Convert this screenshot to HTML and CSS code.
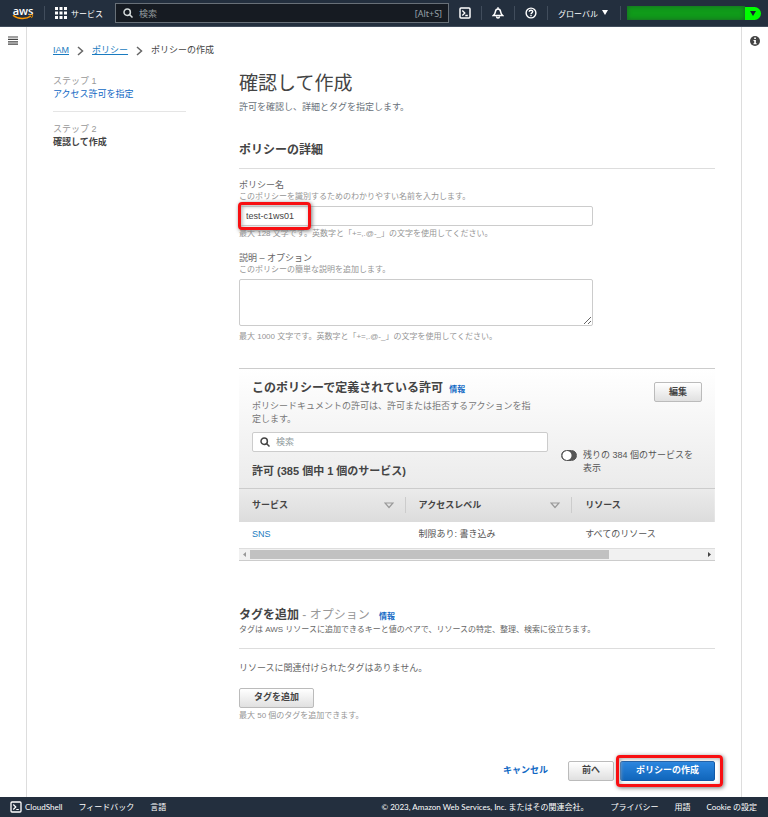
FILE: index.html
```html
<!DOCTYPE html>
<html lang="ja">
<head>
<meta charset="utf-8">
<title>ポリシーの作成 | IAM</title>
<link rel="stylesheet" href="styles.css">
</head>
<body>
<header class="topbar">
  <a class="logo" href="#"><span>aws</span>
    <svg width="22" height="6" viewBox="0 0 22 6"><path d="M1 1.2C6 5.4 14 5.4 19 2" fill="none" stroke="#f90" stroke-width="1.5"/><path d="M17 .8c2-.6 3.5-.4 3.6 0 .2.700-.3 2.200-1.300 3.200" fill="none" stroke="#f90" stroke-width="1"/></svg>
  </a>
  <i class="sep"></i>
  <button class="top-btn services" type="button">
    <svg width="12" height="12" viewBox="0 0 12 12" fill="#fff"><path d="M0 0h3v3H0zM4.500 0h3v3h-3zM9 0h3v3H9zM0 4.500h3v3H0zM4.500 4.500h3v3h-3zM9 4.500h3v3H9zM0 9h3v3H0zM4.500 9h3v3h-3zM9 9h3v3H9z"/></svg>
    サービス
  </button>
  <div class="top-search">
    <svg width="10" height="10" viewBox="0 0 10 10" fill="none" stroke="#d5dbdb" stroke-width="1.500"><circle cx="4.200" cy="4.200" r="3.200"/><path d="M6.500 6.500 9.500 9.500"/></svg>
    <input type="search" placeholder="検索" aria-label="検索">
    <span>[Alt+S]</span>
  </div>
  <div class="top-tools">
    <button class="top-btn tool" type="button" aria-label="CloudShell">
      <svg width="12" height="12" viewBox="0 0 12 12" fill="none" stroke="#fff"><rect x="1" y="1" width="10" height="10" rx="1" stroke-width="1.500"/><path d="M3.300 3.500 5.800 6 3.300 8.500M6.300 8.500h2.500" stroke-width="1.300"/></svg>
    </button>
    <i class="sep"></i>
    <button class="top-btn tool" type="button" aria-label="通知">
      <svg width="12" height="12" viewBox="0 0 12 12" fill="none" stroke="#fff" stroke-width="1.500"><path d="M6 .3v1.500M1.300 8.500h9.400C9 7 8.800 6 8.600 4.600 8.300 2.800 7.300 2 6 2S3.700 2.800 3.400 4.600C3.200 6 3 7 1.300 8.500zM4.500 9.500c.2 2 2.800 2 3 0"/></svg>
    </button>
    <i class="sep"></i>
    <button class="top-btn tool" type="button" aria-label="ヘルプ">
      <svg width="12" height="12" viewBox="0 0 12 12" fill="none" stroke="#fff" stroke-width="1.400"><circle cx="6" cy="6" r="4.900"/><path d="M4.200 4.800C4.300 2.700 7.800 2.800 7.700 4.800 7.600 5.900 6 5.800 6 7.200M6 8v1.300"/></svg>
    </button>
    <i class="sep"></i>
    <button class="top-btn region" type="button">グローバル <svg width="6" height="6" viewBox="0 0 6 6"><path d="M0 0h6L3 5z" fill="#fff"/></svg></button>
    <i class="sep"></i>
    <button class="account" type="button" aria-label="アカウント"><span></span><svg width="6" height="5" viewBox="0 0 6 5"><path d="M0 0h6L3 5z" fill="#16222e"/></svg></button>
  </div>
</header>

<div class="shell">
  <aside class="rail rail-left">
    <button type="button" aria-label="メニュー"><svg width="10" height="9" viewBox="0 0 10 9"><path d="M0 1h10M0 3.400h10M0 5.800h10M0 8.200h10" stroke="#444" stroke-width="1.200"/></svg></button>
  </aside>
  <main class="page">
    <nav class="crumbs" aria-label="パンくず">
      <a href="#">IAM</a>
      <svg width="7" height="10" viewBox="0 0 7 10"><path d="M1 1l4.500 4L1 9" fill="none" stroke="#666" stroke-width="1.500"/></svg>
      <a href="#">ポリシー</a>
      <svg width="7" height="10" viewBox="0 0 7 10"><path d="M1 1l4.500 4L1 9" fill="none" stroke="#666" stroke-width="1.500"/></svg>
      <span>ポリシーの作成</span>
    </nav>
    <div class="wizard">
      <ol class="steps">
        <li><small>ステップ 1</small><a href="#">アクセス許可を指定</a></li>
        <li><small>ステップ 2</small><strong>確認して作成</strong></li>
      </ol>
      <form class="content">
        <h1>確認して作成</h1>
        <p class="lead">許可を確認し、詳細とタグを指定します。</p>

        <section class="details">
          <h2>ポリシーの詳細</h2>
          <div class="field">
            <label for="name">ポリシー名</label>
            <p class="hint">このポリシーを識別するためのわかりやすい名前を入力します。</p>
            <div class="marked name-mark"><input id="name" type="text" value="test-c1ws01"></div>
            <p class="hint below">最大 128 文字です。英数字と「+=,.@-_」の文字を使用してください。</p>
          </div>
          <div class="field">
            <label for="desc">説明 – オプション</label>
            <p class="hint">このポリシーの簡単な説明を追加します。</p>
            <textarea id="desc"></textarea>
            <p class="hint below">最大 1000 文字です。英数字と「+=,.@-_」の文字を使用してください。</p>
          </div>
        </section>

        <section class="panel">
          <div class="panel-head">
            <div class="panel-main">
              <h2>このポリシーで定義されている許可 <a class="info" href="#">情報</a></h2>
              <p>ポリシードキュメントの許可は、許可または拒否するアクションを指定します。</p>
              <div class="search">
                <svg width="10" height="10" viewBox="0 0 10 10" fill="none" stroke="#444" stroke-width="1.500"><circle cx="4.200" cy="4.200" r="3.200"/><path d="M6.500 6.500 9.500 9.500"/></svg>
                <input type="search" placeholder="検索" aria-label="許可を検索">
              </div>
              <h3>許可 (385 個中 1 個のサービス)</h3>
            </div>
            <div class="panel-side">
              <button class="btn" type="button">編集</button>
              <label class="toggle"><input type="checkbox" role="switch"><span>残りの 384 個のサービスを表示</span></label>
            </div>
          </div>
          <table>
            <thead><tr>
              <th><div>サービス<svg width="10" height="7" viewBox="0 0 10 7"><path d="M1 1h8L5 5.500z" fill="none" stroke="#999" stroke-width="1.200"/></svg></div></th>
              <th><div>アクセスレベル<svg width="10" height="7" viewBox="0 0 10 7"><path d="M1 1h8L5 5.500z" fill="none" stroke="#999" stroke-width="1.200"/></svg></div></th>
              <th><div>リソース</div></th>
            </tr></thead>
            <tbody><tr><td><a href="#">SNS</a></td><td>制限あり: 書き込み</td><td>すべてのリソース</td></tr></tbody>
          </table>
          <div class="hscroll">
            <svg width="11" height="7" viewBox="0 0 11 7"><path d="M7 1v5L4 3.500z" fill="#999"/></svg>
            <div class="track"><div class="thumb"></div></div>
            <svg width="11" height="7" viewBox="0 0 11 7"><path d="M4 1v5l3-2.500z" fill="#444"/></svg>
          </div>
        </section>

        <section class="tags">
          <h2>タグを追加 <span>- オプション</span> <a class="info" href="#">情報</a></h2>
          <p class="tag-desc">タグは AWS リソースに追加できるキーと値のペアで、リソースの特定、整理、検索に役立ちます。</p>
          <p class="empty">リソースに関連付けられたタグはありません。</p>
          <button class="btn" type="button">タグを追加</button>
          <p class="hint">最大 50 個のタグを追加できます。</p>
        </section>

        <div class="actions">
          <a href="#">キャンセル</a>
          <button class="btn" type="button">前へ</button>
          <div class="marked submit-mark"><button class="btn primary" type="submit">ポリシーの作成</button></div>
        </div>
      </form>
    </div>
  </main>
  <aside class="rail rail-right">
    <button type="button" aria-label="情報"><svg width="10" height="10" viewBox="0 0 10 10"><circle cx="5" cy="5" r="5" fill="#444"/><path d="M4.200 1.500h1.700V3H4.200zM3.500 4h2.400v3.200h.8v1H3.400v-1h.8V5h-.7z" fill="#fff"/></svg></button>
  </aside>
</div>

<footer class="footer">
  <a class="shell-link" href="#"><svg width="12" height="12" viewBox="0 0 12 12" fill="none" stroke="#fff"><rect x="1" y="1" width="10" height="10" rx="1" stroke-width="1.300"/><path d="M3.300 3.500 5.800 6 3.300 8.500M6.300 8.500h2.500" stroke-width="1.200"/></svg>CloudShell</a>
  <a href="#">フィードバック</a>
  <a href="#">言語</a>
  <span class="copy">© 2023, Amazon Web Services, Inc. またはその関連会社。</span>
  <a class="privacy" href="#">プライバシー</a>
  <a href="#">用語</a>
  <a href="#">Cookie の設定</a>
</footer>
</body>
</html>
```
FILE: styles.css
```css
*, *::before, *::after { box-sizing: border-box; }
body {
  margin: 0;
  min-height: 100vh;
  display: flex;
  flex-direction: column;
  background: #fff;
  color: #444;
  font: 9px/13px "Liberation Sans", "Noto Sans CJK JP", sans-serif;
}
h1, h2, h3, p, ol { margin: 0; padding: 0; }
a { color: #0f68c4; text-decoration: none; }
button, input, textarea { font: inherit; color: inherit; }
svg { display: block; flex: none; }

/* Top bar */
.topbar {
  display: flex;
  align-items: center;
  height: 27px;
  padding: 0 7px 0 12px;
  background: #232f3e;
  border-bottom: 1px solid #414d5c;
  color: #fff;
  font-family: "Noto Sans", "Noto Sans CJK JP", sans-serif;
}
.logo {
  width: 22px;
  color: #fff;
  font: 600 11px/9px "Open Sans", sans-serif;
}
.logo span { display: block; height: 8px; text-align: center; }
.sep { width: 1px; height: 14px; background: #414d5c; flex: none; }
.logo + .sep { margin: 0 10px; }
.top-btn {
  display: flex;
  align-items: center;
  gap: 4px;
  padding: 0;
  border: 0;
  background: none;
  white-space: nowrap;
}
.services { font-size: 8px; }
.top-search {
  flex: 1;
  display: flex;
  align-items: center;
  gap: 6px;
  height: 20px;
  margin: 0 10px 0 12px;
  padding: 0 6px 0 7px;
  background: #161b22;
  border: 1px solid #687078;
  color: #95a0a8;
}
.top-search input, .search input {
  flex: 1;
  min-width: 0;
  padding: 0;
  border: 0;
  outline: 0;
  background: none;
}
input::placeholder { color: #909a9c; opacity: 1; }
.top-tools { display: flex; align-items: center; }
.tool { padding: 0 10px; }
.tool:first-child { padding-left: 0; }
.region { padding: 0 12px 0 10px; font-size: 8px; gap: 4px; }
.account {
  display: flex;
  align-items: center;
  width: 134px;
  height: 13px;
  margin-left: 6px;
  padding: 0 5px 0 0;
  border: 0;
  border-radius: 0 7px 7px 0;
  background: #0f0;
}
.account span {
  flex: 1;
  height: 14px;
  margin-right: 5px;
  background: #109b1a;
  box-shadow: inset 0 0 5px #1b6028;
}

/* Frame */
.shell { flex: 1; display: flex; }
.rail { width: 27px; padding-top: 9px; flex: none; }
.rail button { display: block; padding: 0; border: 0; background: none; }
.rail-left { padding-left: 8px; border-right: 1px solid #ddd; }
.rail-right { padding-left: 8px; border-left: 1px solid #ddd; }
.page { flex: 1; min-width: 0; padding: 17px 26px 14px; }
.crumbs { display: flex; align-items: center; gap: 8px; }
.crumbs a { color: #1a7bc0; text-decoration: underline; }
.wizard { display: flex; gap: 53px; padding-top: 15px; }

/* Steps */
.steps { width: 133px; flex: none; padding-top: 3px; list-style: none; }
.steps li { padding-bottom: 10px; }
.steps li + li { padding-top: 11px; border-top: 1px solid #e5e5e5; }
.steps small { display: block; color: #999; font-size: 9px; }
.steps a, .steps strong { display: block; }

/* Content */
.content { flex: 1; min-width: 0; }
h1 { font-size: 19px; line-height: 24px; font-weight: 400; }
h2 { font-size: 12px; line-height: 18px; }
h3 { font-size: 11px; line-height: 13px; }
.lead { padding-top: 5px; color: #687078; }
.details h2 { margin-top: 27px; padding-bottom: 9px; border-bottom: 1px solid #ddd; }
.field { width: 75%; max-width: 354px; padding-top: 10px; }
.field label { display: block; color: #666; line-height: 12px; }
.hint { color: #959595; font-size: 8px; line-height: 11px; }
.below { padding-top: 2px; }
.field + .field { padding-top: 13px; }
.field input, .field textarea {
  display: block;
  width: 100%;
  height: 20px;
  margin: 4px 0 0;
  padding: 0 6px;
  border: 1px solid #ccc;
  border-radius: 2px;
  outline: 0;
  background: #fff;
}
.field textarea { height: 47px; margin-bottom: 3px; resize: both; }

/* Red marker frames lying over the controls */
.marked { position: relative; }
.marked::after {
  content: "";
  position: absolute;
  border: 3px solid #f80f12;
  border-radius: 4px;
  box-shadow: 1px 1px 4px #777, inset 1px 1px 4px #aaa;
  pointer-events: none;
}
.name-mark::after { left: -1px; top: -4px; width: 73px; height: 28px; }
.submit-mark::after { inset: -6px -8px -6px -4px; }

/* Buttons */
.btn {
  height: 20px;
  padding: 0 13px;
  border: 1px solid #bbb;
  border-radius: 2px;
  background: linear-gradient(#fff, #e0e0e0);
  color: #444;
  font-weight: 700;
  white-space: nowrap;
}
.primary {
  border-color: #1059a8;
  background: linear-gradient(#2a86e0, #1166bb);
  color: #fff;
  padding: 0 15px;
}
.info { margin-left: 3px; font-size: 8px; line-height: 12px; font-weight: 700; }

/* Permissions panel */
.panel { margin-top: 26px; border-top: 1px solid #ccc; border-bottom: 1px solid #ccc; }
.panel-head {
  display: flex;
  gap: 13px;
  padding: 10px 13px 10px;
  background: linear-gradient(#fff, #ebebeb);
}
.panel-main { flex: 1; }
.panel-main p { padding: 3px 10px 6px 0; color: #777; }
.panel-side {
  width: 141px;
  flex: none;
  display: flex;
  flex-direction: column;
  align-items: flex-end;
  justify-content: space-between;
  padding: 3px 0 3px;
}
.panel-side .btn { width: 48px; }
.search {
  display: flex;
  align-items: center;
  gap: 6px;
  height: 20px;
  margin-bottom: 13px;
  padding: 0 7px;
  border: 1px solid #ccc;
  border-radius: 2px;
  background: #fff;
}
.toggle { display: flex; gap: 6px; width: 100%; color: #555; }
.toggle span { flex: 1; }
.toggle input {
  appearance: none;
  width: 16px;
  height: 11px;
  margin: 1px 0 0;
  border: 1px solid #555;
  border-radius: 6px;
  background: radial-gradient(circle at 5px 50%, #fff 4px, #555 5px);
}
table { width: 100%; border-collapse: collapse; table-layout: fixed; }
th, td { padding: 0 0 0 13px; text-align: left; width: 35%; }
th:last-child, td:last-child { width: 30%; }
thead { background: linear-gradient(#ebebeb, #dcdcdc); }
th { height: 33px; border-top: 1px solid #ccc; }
th div {
  display: flex;
  align-items: center;
  justify-content: space-between;
  height: 16px;
  padding-right: 11px;
  border-right: 1px solid #ccc;
}
th:last-child div { border: 0; }
td { height: 26px; color: #555; }
td a { color: #1a7bc0; }
.hscroll { display: flex; align-items: center; height: 12px; background: #f1f1f1; border-top: 1px solid #ddd; }
.track { flex: 1; }
.thumb { width: 79%; height: 9px; background: #c1c1c1; }

/* Tags */
.tags { padding-top: 47px; }
.tags h2 { line-height: 15px; }
.tags h2 span { color: #999; font-weight: 400; }
.tags .info { margin-left: 6px; }
.tag-desc { padding-bottom: 12px; border-bottom: 1px solid #ddd; color: #666; font-size: 8px; }
.empty { padding: 13px 0; color: #666; }
.tags .btn { display: block; min-width: 75px; }
.tags .hint { padding-top: 2px; }

.actions {
  display: flex;
  align-items: center;
  justify-content: flex-end;
  padding-top: 40px;
}
.actions a { margin-right: 20px; font-weight: 700; }
.actions .primary { min-width: 95px; display: block; }
.submit-mark { margin-left: 6px; }

/* Footer */
.footer {
  display: flex;
  align-items: center;
  gap: 16px;
  height: 20px;
  padding: 0 11px 0 10px;
  background: #232f3e;
  font: 8px/12px Lato, "Noto Sans CJK JP", sans-serif;
  color: #fff;
  white-space: nowrap;
}
.footer a { color: #fff; }
.shell-link { display: flex; gap: 3px; }
.copy { margin-left: auto; }
.privacy { margin-left: 6px; }
```
